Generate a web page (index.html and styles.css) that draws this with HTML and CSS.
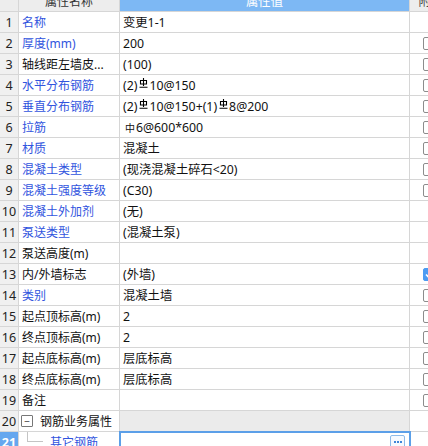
FILE: index.html
```html
<!DOCTYPE html>
<html lang="zh">
<head>
<meta charset="utf-8">
<link rel="stylesheet" href="styles.css">
</head>
<body>
<div class="grid">
  <div class="row hd">
    <div class="n"></div>
    <div class="k hc">属性名称</div>
    <div class="v hv">属性值</div>
    <div class="x hx">附加</div>
  </div>
  <div class="row"><div class="n">1</div><div class="k b">名称</div><div class="v">变更1-1</div><div class="x"></div></div>
  <div class="row"><div class="n">2</div><div class="k b">厚度(mm)</div><div class="v">200</div><div class="x"><span class="cb"></span></div></div>
  <div class="row"><div class="n">3</div><div class="k">轴线距左墙皮...</div><div class="v">(100)</div><div class="x"><span class="cb"></span></div></div>
  <div class="row"><div class="n">4</div><div class="k b">水平分布钢筋</div><div class="v">(2)<svg class="rb" viewBox="0 0 9 10" width="9" height="10"><path d="M4.5 0V8M1.5 2.5H7.5V6H1.5ZM0.5 9.3H8.5" fill="none" stroke="#000" stroke-width="1.1"/></svg>10@150</div><div class="x"><span class="cb"></span></div></div>
  <div class="row"><div class="n">5</div><div class="k b">垂直分布钢筋</div><div class="v">(2)<svg class="rb" viewBox="0 0 9 10" width="9" height="10"><path d="M4.5 0V8M1.5 2.5H7.5V6H1.5ZM0.5 9.3H8.5" fill="none" stroke="#000" stroke-width="1.1"/></svg>10@150+(1)<svg class="rb" viewBox="0 0 9 10" width="9" height="10"><path d="M4.5 0V8M1.5 2.5H7.5V6H1.5ZM0.5 9.3H8.5" fill="none" stroke="#000" stroke-width="1.1"/></svg>8@200</div><div class="x"><span class="cb"></span></div></div>
  <div class="row"><div class="n">6</div><div class="k b">拉筋</div><div class="v"><span class="hp">中</span>6@600*600</div><div class="x"><span class="cb"></span></div></div>
  <div class="row"><div class="n">7</div><div class="k b">材质</div><div class="v">混凝土</div><div class="x"><span class="cb"></span></div></div>
  <div class="row"><div class="n">8</div><div class="k b">混凝土类型</div><div class="v">(现浇混凝土碎石&lt;20)</div><div class="x"><span class="cb"></span></div></div>
  <div class="row"><div class="n">9</div><div class="k b">混凝土强度等级</div><div class="v">(C30)</div><div class="x"><span class="cb"></span></div></div>
  <div class="row"><div class="n">10</div><div class="k b">混凝土外加剂</div><div class="v">(无)</div><div class="x"></div></div>
  <div class="row"><div class="n">11</div><div class="k b">泵送类型</div><div class="v">(混凝土泵)</div><div class="x"></div></div>
  <div class="row"><div class="n">12</div><div class="k">泵送高度(m)</div><div class="v"></div><div class="x"></div></div>
  <div class="row"><div class="n">13</div><div class="k">内/外墙标志</div><div class="v">(外墙)</div><div class="x"><span class="cb on"><svg viewBox="0 0 13 13" width="13" height="13"><path d="M3 6.5L5.5 9L10 4" fill="none" stroke="#fff" stroke-width="1.6"/></svg></span></div></div>
  <div class="row"><div class="n">14</div><div class="k b">类别</div><div class="v">混凝土墙</div><div class="x"><span class="cb"></span></div></div>
  <div class="row"><div class="n">15</div><div class="k">起点顶标高(m)</div><div class="v">2</div><div class="x"><span class="cb"></span></div></div>
  <div class="row"><div class="n">16</div><div class="k">终点顶标高(m)</div><div class="v">2</div><div class="x"><span class="cb"></span></div></div>
  <div class="row"><div class="n">17</div><div class="k">起点底标高(m)</div><div class="v">层底标高</div><div class="x"><span class="cb"></span></div></div>
  <div class="row"><div class="n">18</div><div class="k">终点底标高(m)</div><div class="v">层底标高</div><div class="x"><span class="cb"></span></div></div>
  <div class="row"><div class="n">19</div><div class="k">备注</div><div class="v"></div><div class="x"><span class="cb"></span></div></div>
  <div class="row"><div class="n">20</div><div class="k grp"><span class="tg">−</span>钢筋业务属性</div><div class="v gv"></div><div class="x"></div></div>
  <div class="row"><div class="n sel">21</div><div class="k b sub"><span class="tree"></span>其它钢筋</div><div class="v act"><span class="more"><i></i><i></i><i></i></span></div><div class="x"></div></div>
</div>
</body>
</html>
```

FILE: styles.css
```css
html, body {
  margin: 0;
  padding: 0;
}
body {
  width: 428px;
  height: 446px;
  overflow: hidden;
  background: #fff;
  font-family: "Noto Sans", "Noto Sans CJK SC", sans-serif;
  font-size: 12px;
  color: #111;
}
.grid {
  width: 450px;
  margin-top: -10px;
}
.row {
  display: grid;
  grid-template-columns: 19px 101px 290px 40px;
  height: 21px;
}
.row > div {
  box-sizing: border-box;
  border-right: 1px solid #d6d6d6;
  border-bottom: 1px solid #d6d6d6;
  display: flex;
  align-items: center;
  white-space: nowrap;
  overflow: hidden;
}
.hd {
  height: 22px;
}
.hd > div {
  background: #ededed;
  color: #333;
}
.hd .hc {
  justify-content: center;
  padding-left: 0;
}
.hd .hv {
  background: #7db8f4;
  color: #fff;
  justify-content: center;
  padding-left: 0;
}
.hd .hx {
  padding-left: 2px;
  color: #444;
}
.n {
  background: #f0f0f0;
  justify-content: center;
  font-size: 12.5px;
  color: #222;
}
.n.sel {
  background: #65a7ef;
  color: #fff;
  font-weight: bold;
}
.k {
  padding-left: 3px;
  color: #111;
}
.k.b {
  color: #3154de;
}
.v {
  padding-left: 3px;
  color: #111;
  font-size: 12.3px;
}
.x {
  justify-content: center;
}
.rb {
  margin: 0 1px 0 2px;
  position: relative;
  top: -2px;
}
.hp {
  font-size: 10px;
  margin: 0 1px 0 2px;
}
.cb {
  width: 13px;
  height: 13px;
  box-sizing: border-box;
  border: 1px solid #8c8c8c;
  border-radius: 2px;
  background: #fff;
  display: flex;
}
.cb.on {
  background: #4d9bf2;
  border-color: #4d9bf2;
}
.cb.on svg {
  margin: -1px;
}
.grp {
  padding-left: 2px;
}
.tg {
  width: 12px;
  height: 12px;
  box-sizing: border-box;
  border: 1px solid #777;
  border-radius: 1px;
  display: flex;
  align-items: center;
  justify-content: center;
  font-size: 10px;
  line-height: 1;
  margin-right: 7px;
  color: #333;
}
.gv {
  background: #ebebeb;
}
.sub {
  padding-left: 8px;
}
.tree {
  align-self: flex-start;
  width: 16px;
  height: 10px;
  box-sizing: border-box;
  border-left: 1px solid #c4c4c4;
  border-bottom: 1px solid #c4c4c4;
  margin-right: 7px;
}
.act {
  outline: 2px solid #5b9fe8;
  outline-offset: -1px;
  justify-content: flex-end;
  padding-right: 4px;
}
.more {
  width: 15px;
  height: 14px;
  box-sizing: border-box;
  border: 1px solid #8dbbea;
  border-radius: 2px;
  background: #f6faff;
  display: flex;
  align-items: center;
  justify-content: center;
  gap: 1px;
}
.more i {
  width: 2px;
  height: 2px;
  background: #3f86d8;
}
```
